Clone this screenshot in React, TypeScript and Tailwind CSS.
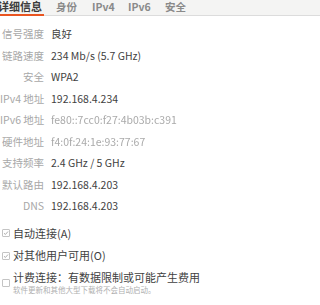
import React from "react";

const rows: { label: string; value: string; blur?: boolean }[] = [
  { label: "信号强度", value: "良好" },
  { label: "链路速度", value: "234 Mb/s (5.7 GHz)" },
  { label: "安全", value: "WPA2" },
  { label: "IPv4 地址", value: "192.168.4.234" },
  { label: "IPv6 地址", value: "fe80::7cc0:f27:4b03b:c391", blur: true },
  { label: "硬件地址", value: "f4:0f:24:1e:93:77:67", blur: true },
  { label: "支持频率", value: "2.4 GHz / 5 GHz" },
  { label: "默认路由", value: "192.168.4.203" },
  { label: "DNS", value: "192.168.4.203" },
];

function Box({ checked }: { checked: boolean }) {
  return (
    <span className="w-[8px] h-[8px] border border-[#c4c4c4] rounded-[1px] bg-white flex items-center justify-center shrink-0">
      {checked && (
        <svg width="6" height="6" viewBox="0 0 6 6">
          <path d="M1 3.2 L2.4 4.5 L5 1.5" stroke="#999" strokeWidth="0.8" fill="none" />
        </svg>
      )}
    </span>
  );
}

export default function App() {
  return (
    <div
      className="w-[320px] h-[305px] bg-white overflow-hidden"
      style={{ fontFamily: '"Noto Sans CJK SC", "Noto Sans", sans-serif' }}
    >
      <div className="h-[16px] bg-[#f4f4f3] border-b border-[#dcdcdc] flex items-start text-[10.5px] leading-[11px] pt-[0.5px]">
        <div className="relative w-[46px] h-full font-bold text-[11px] text-[#3c3c3c] -ml-[2px]">
          <span className="block">详细信息</span>
          <span className="absolute left-0 right-0 bottom-[-1px] h-[2px] bg-[#e95420]" />
        </div>
        <div className="w-[21px] ml-[12px] text-[#8a8a8a] font-semibold whitespace-nowrap">身份</div>
        <div className="w-[22px] ml-[15px] text-[#8a8a8a] font-semibold whitespace-nowrap">IPv4</div>
        <div className="w-[22px] ml-[14px] text-[#8a8a8a] font-semibold whitespace-nowrap">IPv6</div>
        <div className="w-[21px] ml-[15px] text-[#8a8a8a] font-semibold whitespace-nowrap">安全</div>
      </div>

      <div className="pt-[7.5px] flex flex-col">
        {rows.map((r) => (
          <div key={r.label} className="h-[21.5px] flex items-center text-[10.5px] leading-none">
            <div className="w-[44px] text-right text-[#a8a8a8] whitespace-nowrap">{r.label}</div>
            <div
              className={
                r.blur
                  ? "ml-[7px] text-[#aaaaaa] blur-[0.6px] whitespace-nowrap"
                  : "ml-[7px] text-[#3f3f3f] whitespace-nowrap"
              }
            >
              {r.value}
            </div>
          </div>
        ))}
      </div>

      <div className="mt-[5px] flex flex-col text-[11px] leading-none text-[#3f3f3f]">
        <div className="h-[22px] flex items-center gap-[3px] pl-[2px]">
          <Box checked />
          <span>自动连接(A)</span>
        </div>
        <div className="h-[23px] flex items-center gap-[3px] pl-[2px]">
          <Box checked />
          <span>对其他用户可用(O)</span>
        </div>
        <div className="mt-[4px] flex items-center gap-[3px] pl-[2px]">
          <Box checked={false} />
          <div className="flex flex-col">
            <span className="text-[11px] leading-[13px]">计费连接：有数据限制或可能产生费用</span>
            <span className="text-[7.5px] leading-[10px] text-[#b0b0b0] mt-[1px]">软件更新和其他大型下载将不会自动启动。</span>
          </div>
        </div>
      </div>
    </div>
  );
}
